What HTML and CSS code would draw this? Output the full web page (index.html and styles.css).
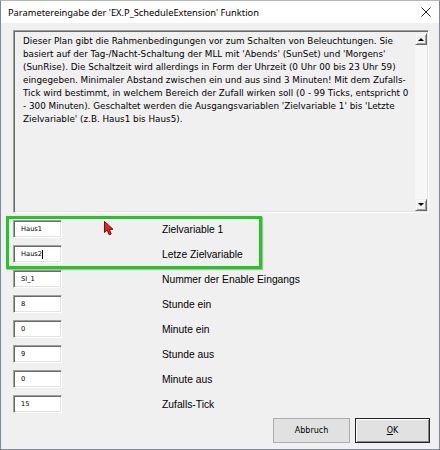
FILE: index.html
```html
<!DOCTYPE html>
<html>
<head>
<meta charset="utf-8">
<link rel="stylesheet" href="styles.css">
</head>
<body>
<div class="window">
  <div class="titlebar">
    <span class="title">Parametereingabe der 'EX.P_ScheduleExtension' Funktion</span>
    <svg class="close" width="10" height="10" viewBox="0 0 10 10"><path d="M0.5 0.5 L9.5 9.5 M9.5 0.5 L0.5 9.5" stroke="#222" stroke-width="1" fill="none"/></svg>
  </div>
  <div class="content">
    <div class="desc">
      <div class="desc-text">Dieser Plan gibt die Rahmenbedingungen vor zum Schalten von Beleuchtungen. Sie<br>basiert auf der Tag-/Nacht-Schaltung der MLL mit 'Abends' (SunSet) und 'Morgens'<br>(SunRise). Die Schaltzeit wird allerdings in Form der Uhrzeit (0 Uhr 00 bis 23 Uhr 59)<br>eingegeben. Minimaler Abstand zwischen ein und aus sind 3 Minuten! Mit dem Zufalls-<br>Tick wird bestimmt, in welchem Bereich der Zufall wirken soll (0 - 99 Ticks, entspricht 0<br>- 300 Minuten). Geschaltet werden die Ausgangsvariablen 'Zielvariable 1' bis 'Letzte<br>Zielvariable' (z.B. Haus1 bis Haus5).</div>
      <div class="scrollbar">
        <div class="sb-btn"><svg width="6" height="4" viewBox="0 0 6 4"><path d="M0 4 L3 1 L6 4 Z" fill="#000"/></svg></div>
        <div class="sb-track"></div>
        <div class="sb-btn"><svg width="6" height="4" viewBox="0 0 6 4"><path d="M0 0 L6 0 L3 3 Z" fill="#000"/></svg></div>
      </div>
    </div>
    <div class="fields">
      <div class="row"><div class="input">Haus1</div><span class="label">Zielvariable 1</span></div>
      <div class="row"><div class="input">Haus2<span class="caret"></span></div><span class="label">Letze Zielvariable</span></div>
      <div class="row"><div class="input">SI_1</div><span class="label">Nummer der Enable Eingangs</span></div>
      <div class="row"><div class="input">8</div><span class="label">Stunde ein</span></div>
      <div class="row"><div class="input">0</div><span class="label">Minute ein</span></div>
      <div class="row"><div class="input">9</div><span class="label">Stunde aus</span></div>
      <div class="row"><div class="input">0</div><span class="label">Minute aus</span></div>
      <div class="row"><div class="input">15</div><span class="label">Zufalls-Tick</span></div>
    </div>
    <div class="buttons">
      <div class="btn">Abbruch</div>
      <div class="btn default"><span class="ul">O</span>K</div>
    </div>
  </div>
  <div class="highlight"></div>
  <svg class="cursor" width="11" height="15" viewBox="0 0 11 15"><path d="M0.5 0.5 L0.5 11.5 L3.2 9 L5.2 13.8 L7.2 13 L5.3 8.3 L9 8.3 Z" fill="#e8231d" stroke="#7a0a06" stroke-width="1" stroke-linejoin="round"/></svg>
</div>
</body>
</html>
```
FILE: styles.css
```css
html, body {
  margin: 0;
  padding: 0;
  background: #f0f0f0;
}
.window {
  position: relative;
  width: 440px;
  height: 450px;
  box-sizing: border-box;
  border: 1px solid #7d8a9b;
  border-top-color: #b8b8b8;
  background: #f0f0f0;
  display: flex;
  flex-direction: column;
  font-family: "DejaVu Sans", sans-serif;
  color: #000;
}
.titlebar {
  height: 22px;
  background: #fff;
  display: flex;
  align-items: center;
  padding-left: 7px;
  padding-right: 7px;
  justify-content: space-between;
}
.title {
  font-family: "Noto Sans", sans-serif;
  font-size: 9.3px;
  color: #000;
}
.close {
  display: block;
  margin-right: 1px;
}
.content {
  flex: 1;
  padding: 7px 10px 0 12px;
  display: flex;
  flex-direction: column;
}
.desc {
  height: 183px;
  box-sizing: border-box;
  border-top: 1px solid #a0a0a0;
  border-left: 1px solid #a0a0a0;
  border-right: 1px solid #ffffff;
  border-bottom: 1px solid #ffffff;
  box-shadow: inset 1px 1px 0 #696969, inset -1px -1px 0 #e3e3e3;
  display: flex;
  padding: 2px 1px 1px 2px;
}
.desc-text {
  flex: 1;
  padding: 2px 0 0 7px;
  font-size: 8.8px;
  line-height: 13px;
  white-space: nowrap;
}
.scrollbar {
  width: 12px;
  display: flex;
  flex-direction: column;
  background: #f7f7f7;
}
.sb-btn {
  height: 12px;
  box-sizing: border-box;
  background: #f0f0f0;
  border-top: 1px solid #f0f0f0;
  border-left: 1px solid #f0f0f0;
  border-right: 1px solid #696969;
  border-bottom: 1px solid #696969;
  box-shadow: inset 1px 1px 0 #fff, inset -1px -1px 0 #a0a0a0;
  display: flex;
  align-items: center;
  justify-content: center;
}
.sb-track {
  flex: 1;
}
.fields {
  margin-top: 7px;
  display: flex;
  flex-direction: column;
  gap: 7px;
}
.row {
  display: flex;
  align-items: center;
  height: 18px;
}
.input {
  width: 49px;
  height: 18px;
  box-sizing: border-box;
  background: #fff;
  border-top: 1px solid #a0a0a0;
  border-left: 1px solid #a0a0a0;
  border-right: 1px solid #fff;
  border-bottom: 1px solid #fff;
  box-shadow: inset 1px 1px 0 #696969, inset -1px -1px 0 #e3e3e3;
  padding-left: 7px;
  font-size: 6.7px;
  line-height: 16px;
  display: flex;
  align-items: center;
}
.caret {
  display: inline-block;
  width: 1px;
  height: 9px;
  background: #000;
}
.label {
  margin-left: 100px;
  font-family: "Liberation Sans", sans-serif;
  font-size: 10.3px;
}
.buttons {
  margin-top: 5px;
  margin-right: -1px;
  display: flex;
  justify-content: flex-end;
  gap: 5px;
}
.btn {
  width: 77px;
  height: 25px;
  box-sizing: border-box;
  background: #e1e1e1;
  border: 1px solid #adadad;
  display: flex;
  align-items: center;
  justify-content: center;
  font-size: 8px;
}
.btn.default {
  width: 75px;
  border: 1px solid #222;
  box-shadow: inset 1px 1px 0 #fff, inset -1px -1px 0 #8a8a8a;
}
.ul {
  text-decoration: underline;
}
.highlight {
  position: absolute;
  left: 5px;
  top: 215px;
  width: 250px;
  height: 47px;
  border: 3px solid #1fc91f;
  box-shadow: 1px 1px 1px rgba(0,0,0,0.25);
}
.cursor {
  position: absolute;
  left: 103px;
  top: 220px;
}
```
